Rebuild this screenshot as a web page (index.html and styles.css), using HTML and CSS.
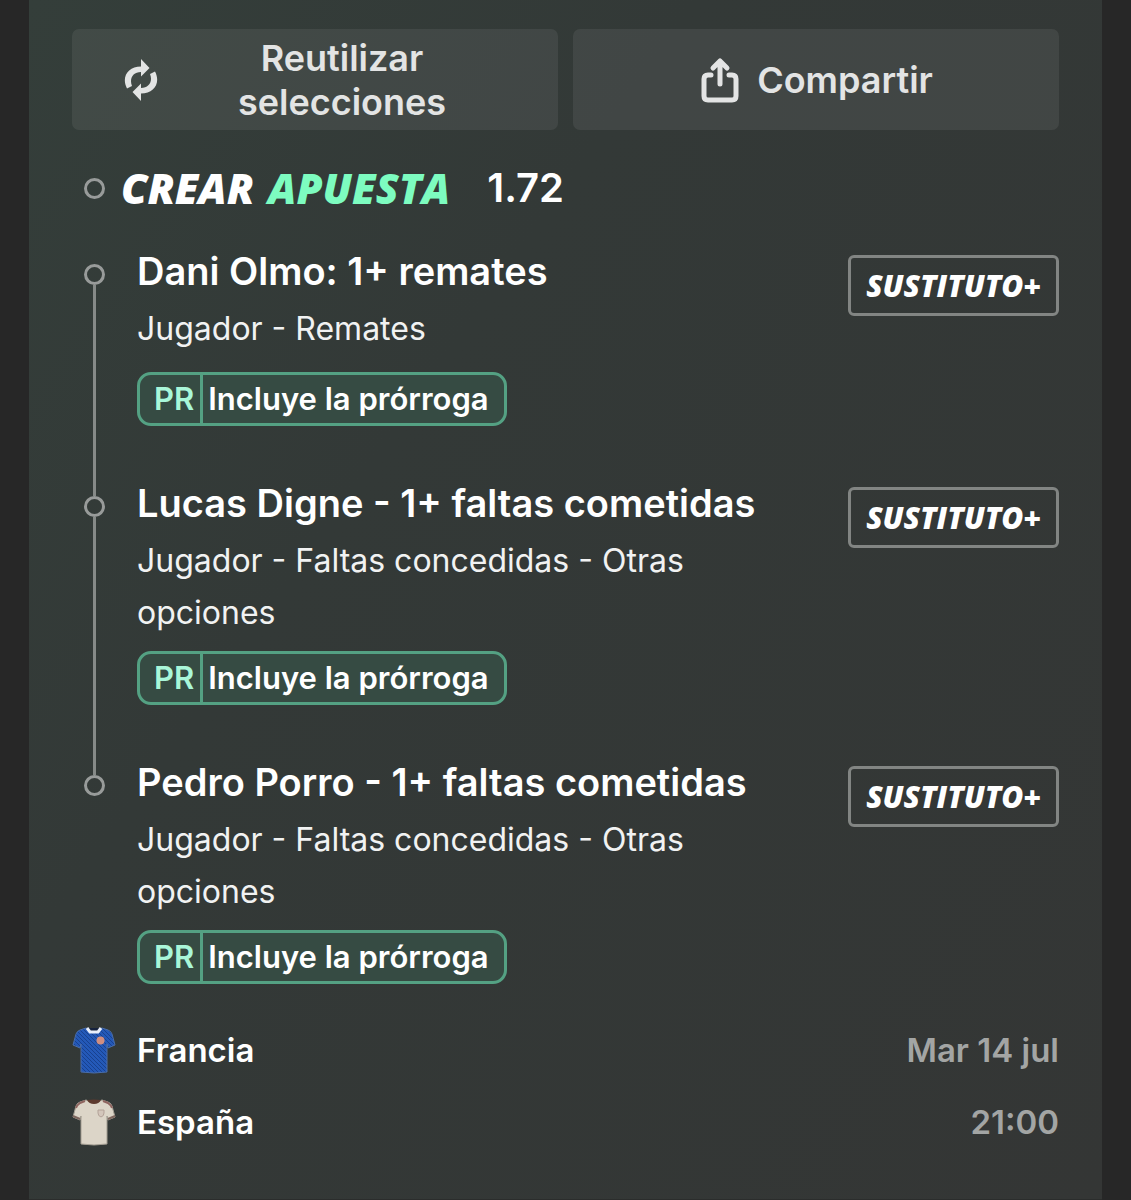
FILE: index.html
```html
<!DOCTYPE html>
<html lang="es">
<head>
<meta charset="utf-8">
<meta name="viewport" content="width=device-width, initial-scale=1">
<title>Crear apuesta</title>
<link rel="stylesheet" href="styles.css">
</head>
<body>
<main class="slip">
  <div class="actions">
    <button class="action" type="button">
      <svg class="icon-reuse" viewBox="0 0 34 44" aria-hidden="true">
        <path d="M3 30.500C-3 19 4 8.500 17 8.500V1L25.500 10 17 18.500V14C9 14 5 20.500 8 28Z"/>
        <path d="M3 30.500C-3 19 4 8.500 17 8.500V1L25.500 10 17 18.500V14C9 14 5 20.500 8 28Z" transform="rotate(180 17 22)"/>
      </svg>
      <span class="action-wide">Reutilizar selecciones</span>
    </button>
    <button class="action" type="button">
      <svg class="icon-share" viewBox="0 0 38 46" aria-hidden="true">
        <path d="M10 18H7Q3 18 3 22V39Q3 43 7 43H31Q35 43 35 39V22Q35 18 31 18H28M19 27V4M12 11L19 4L26 11"/>
      </svg>
      <span>Compartir</span>
    </button>
  </div>

  <header class="bet">
    <span class="dot"></span>
    <h1 class="brand"><span>CREAR</span> <span class="accent">APUESTA</span></h1>
    <span class="odds">1.72</span>
  </header>

  <ol class="picks">
    <li class="pick">
      <div class="rail"><span class="lead"></span><span class="dot"></span><span class="line"></span></div>
      <div class="detail">
        <h2 class="title">Dani Olmo: 1+ remates</h2>
        <p class="market">Jugador - Remates</p>
        <div class="chip"><span class="chip-code">PR</span><span class="chip-text">Incluye la prórroga</span></div>
      </div>
      <span class="tag">SUSTITUTO+</span>
    </li>
    <li class="pick">
      <div class="rail"><span class="lead"></span><span class="dot"></span><span class="line"></span></div>
      <div class="detail">
        <h2 class="title">Lucas Digne - 1+ faltas cometidas</h2>
        <p class="market">Jugador - Faltas concedidas - Otras opciones</p>
        <div class="chip"><span class="chip-code">PR</span><span class="chip-text">Incluye la prórroga</span></div>
      </div>
      <span class="tag">SUSTITUTO+</span>
    </li>
    <li class="pick">
      <div class="rail"><span class="lead"></span><span class="dot"></span><span class="line"></span></div>
      <div class="detail">
        <h2 class="title">Pedro Porro - 1+ faltas cometidas</h2>
        <p class="market">Jugador - Faltas concedidas - Otras opciones</p>
        <div class="chip"><span class="chip-code">PR</span><span class="chip-text">Incluye la prórroga</span></div>
      </div>
      <span class="tag">SUSTITUTO+</span>
    </li>
  </ol>

  <footer class="match">
    <div class="row">
      <svg class="shirt" viewBox="0 0 44 48" aria-hidden="true">
        <defs>
          <pattern id="weave" width="4" height="4" patternUnits="userSpaceOnUse">
            <rect width="4" height="4" fill="#2459b8"/>
            <path d="M0 0L4 4" stroke="#18418f" stroke-width="1"/>
          </pattern>
        </defs>
        <path d="M14 2L8 4Q5 5 4 8L1 19L8 22L9 18V46Q22 48 35 46V18L36 22L43 19L40 8Q39 5 36 4L30 2Q22 6 14 2Z" fill="url(#weave)" stroke="#4a6da8"/>
        <path d="M15 2L18 6H26L29 2" fill="#17233d" stroke="#e8eefb" stroke-width="3"/>
        <circle cx="28.500" cy="14.500" r="4" fill="#d08e80"/>
      </svg>
      <span class="team">Francia</span>
      <span class="when">Mar 14 jul</span>
    </div>
    <div class="row">
      <svg class="shirt" viewBox="0 0 44 48" aria-hidden="true">
        <path d="M14 2L8 4Q5 5 4 8L1 19L8 22L9 18V46Q22 48 35 46V18L36 22L43 19L40 8Q39 5 36 4L30 2Q22 6 14 2Z" fill="#dcd5c8" stroke="#a39d92"/>
        <path d="M13 3L8 5Q5 7 4 10M31 3L36 5Q39 7 40 10" fill="none" stroke="#8f6560" stroke-width="2"/>
        <path d="M1 18L8 21M43 18L36 21" stroke="#7d665e" stroke-width="2"/>
        <path d="M15 2Q22 1 29 2Q27 6 22 6Q17 6 15 2Z" fill="#5d3a2e"/>
        <path d="M26 12H32V15Q32 18 29 19Q26 18 26 15Z" fill="#d3c6bb" stroke="#b3a298"/>
      </svg>
      <span class="team">España</span>
      <span class="when">21:00</span>
    </div>
  </footer>
</main>
</body>
</html>
```
FILE: styles.css
```css
* {
  box-sizing: border-box;
}

body {
  margin: 0;
  padding: 0 29px;
  background: #272727;
  color: #fff;
  font-family: Inter, "Liberation Sans", sans-serif;
}

h1,
h2,
p,
ol {
  margin: 0;
  padding: 0;
}

.slip {
  min-height: 100vh;
  padding: 29px 43px 53px;
  background: linear-gradient(125deg, #343e3a 0%, #333937 35%, #343635 100%);
  border-bottom: 1px solid #2b2d2c;
}

.actions {
  display: grid;
  grid-template-columns: 1fr 1fr;
  gap: 15px;
}

.action {
  display: flex;
  align-items: center;
  justify-content: center;
  gap: 18px;
  min-height: 101px;
  padding: 7px 50px 6px 52px;
  border: 0;
  border-radius: 7px;
  background: rgba(255, 255, 255, 0.07);
  color: #e3e4e4;
  font: 600 36px/44px Inter, "Liberation Sans", sans-serif;
}

.action-wide {
  flex: 1;
  text-align: center;
}

.icon-reuse {
  flex: none;
  width: 34px;
  height: 44px;
  fill: currentColor;
}

.icon-share {
  flex: none;
  width: 38px;
  height: 46px;
  fill: none;
  stroke: currentColor;
  stroke-width: 5;
  stroke-linecap: round;
  stroke-linejoin: round;
}

.bet {
  display: flex;
  align-items: center;
  height: 48px;
  margin: 34px 0;
  padding-left: 12px;
}

.dot {
  flex: none;
  width: 21px;
  height: 21px;
  border: 3px solid #989b9a;
  border-radius: 50%;
}

.brand {
  display: flex;
  gap: 14px;
  margin-left: 16px;
  font: italic 800 42px/48px "Open Sans", "Liberation Sans", sans-serif;
}

.accent {
  color: #7dfcc0;
}

.odds {
  margin-left: 37px;
  font-size: 40px;
  font-weight: 600;
  line-height: 48px;
}

.picks {
  list-style: none;
}

.pick {
  display: flex;
  align-items: flex-start;
}

.rail {
  display: flex;
  flex: none;
  flex-direction: column;
  align-items: center;
  align-self: stretch;
  width: 45px;
  margin-right: 20px;
}

.lead,
.line {
  width: 3px;
  background: #868a88;
}

.lead {
  height: 18px;
}

.line {
  flex: 1;
}

.pick:first-child .lead,
.pick:last-child .line {
  background: none;
}

.detail {
  flex: 1;
  padding: 0 30px 52px 0;
}

.pick:last-child .detail {
  padding-bottom: 0;
}

.title {
  font-size: 38px;
  font-weight: 600;
  line-height: 50px;
}

.market {
  min-height: 57px;
  margin: 7px 0 12px;
  padding-bottom: 0;
  color: #f1f2f2;
  font-size: 32px;
  line-height: 52px;
}

.chip {
  display: inline-flex;
  height: 54px;
  border: 3px solid #54a183;
  border-radius: 14px;
  background: #364b43;
  font-size: 31px;
  font-weight: 600;
  line-height: 48px;
  vertical-align: top;
}

.chip-code {
  padding: 0 6px 0 14px;
  border-right: 3px solid #54a183;
  color: #a9f7d9;
}

.chip-text {
  padding: 0 15px 0 5px;
}

.tag {
  flex: none;
  margin-top: 9px;
  padding: 0 15px;
  border: 3px solid #828583;
  border-radius: 6px;
  font: italic 800 30px/55px "Open Sans", "Liberation Sans", sans-serif;
}

.match {
  display: grid;
  gap: 24px;
  margin-top: 42px;
}

.row {
  display: flex;
  align-items: center;
  height: 48px;
}

.shirt {
  flex: none;
  width: 44px;
  height: 48px;
}

.team,
.when {
  font-size: 33px;
  font-weight: 600;
  line-height: 48px;
}

.team {
  margin-left: 21px;
}

.when {
  margin-left: auto;
  color: #a3a5a4;
}
```
